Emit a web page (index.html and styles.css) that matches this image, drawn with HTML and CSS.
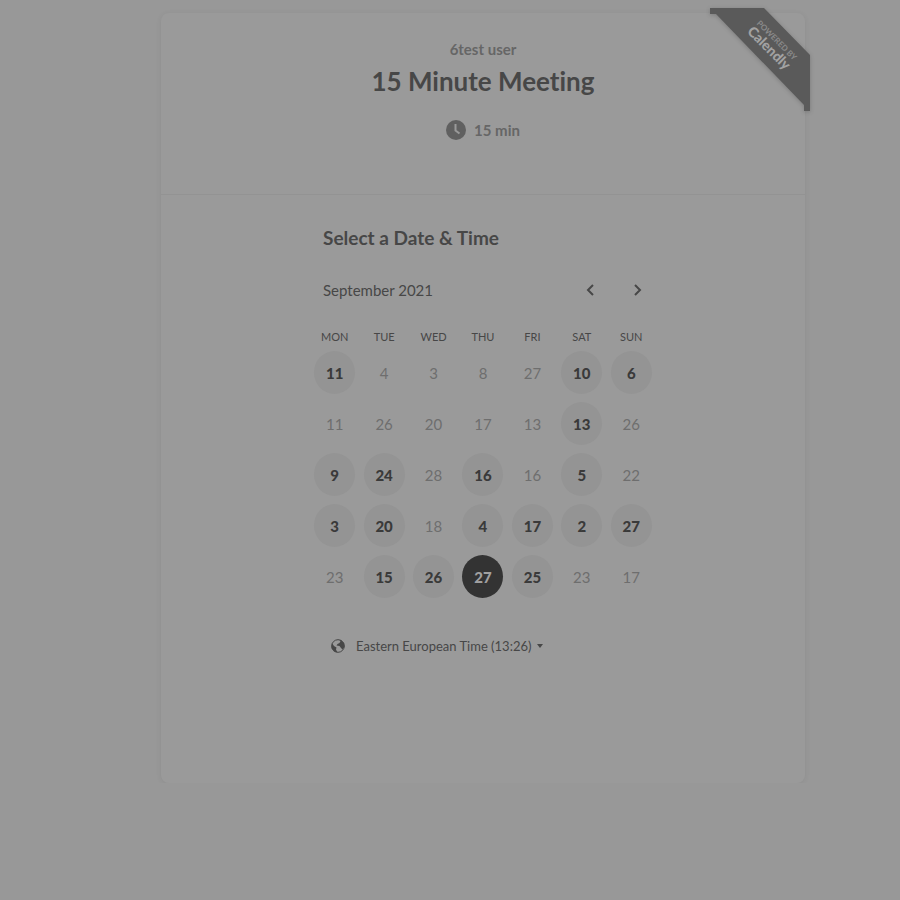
FILE: index.html
```html
<!DOCTYPE html>
<html lang="en">
<head>
<meta charset="utf-8">
<meta name="viewport" content="width=device-width, initial-scale=1">
<title>15 Minute Meeting</title>
<link rel="stylesheet" href="styles.css">
</head>
<body>
<main class="card">
  <a class="badge" href="#" aria-label="Powered by Calendly">
    <svg class="badge-shape" viewBox="0 0 100 103" aria-hidden="true">
      <path class="badge-band" d="M0 0H54L100 47V103H94V97L6 6H0Z"/>
    </svg>
    <span class="badge-text"><span class="badge-small">POWERED BY</span><span class="badge-brand">Calendly</span></span>
  </a>
  <header class="intro">
    <p class="host">6test user</p>
    <h1 class="title">15 Minute Meeting</h1>
    <p class="duration">
      <svg class="clock" viewBox="0 0 20 20" aria-hidden="true"><circle cx="10" cy="10" r="10"/><path d="M9.500 4V10.500L13.500 13.500"/></svg>
      <span>15 min</span>
    </p>
  </header>
  <section class="picker">
    <h2 class="heading">Select a Date &amp; Time</h2>
    <div class="month-bar">
      <span>September 2021</span>
      <div class="arrows">
        <button class="arrow" type="button" aria-label="Previous month"><svg viewBox="0 0 8 12"><path d="M7 1L2 6L7 11"/></svg></button>
        <button class="arrow" type="button" aria-label="Next month"><svg viewBox="0 0 8 12"><path d="M1 1L6 6L1 11"/></svg></button>
      </div>
    </div>
    <table class="calendar">
      <thead>
        <tr><th>MON</th><th>TUE</th><th>WED</th><th>THU</th><th>FRI</th><th>SAT</th><th>SUN</th></tr>
      </thead>
      <tbody>
        <tr><td><button class="day">11</button></td><td>4</td><td>3</td><td>8</td><td>27</td><td><button class="day">10</button></td><td><button class="day">6</button></td></tr>
        <tr><td>11</td><td>26</td><td>20</td><td>17</td><td>13</td><td><button class="day">13</button></td><td>26</td></tr>
        <tr><td><button class="day">9</button></td><td><button class="day">24</button></td><td>28</td><td><button class="day">16</button></td><td>16</td><td><button class="day">5</button></td><td>22</td></tr>
        <tr><td><button class="day">3</button></td><td><button class="day">20</button></td><td>18</td><td><button class="day">4</button></td><td><button class="day">17</button></td><td><button class="day">2</button></td><td><button class="day">27</button></td></tr>
        <tr><td>23</td><td><button class="day">15</button></td><td><button class="day">26</button></td><td><button class="day selected">27</button></td><td><button class="day">25</button></td><td>23</td><td>17</td></tr>
      </tbody>
    </table>
    <div class="zone">
      <svg class="globe" viewBox="0 0 14 14" aria-hidden="true"><circle cx="7" cy="7" r="6.300"/><path d="M1 4L3 7L5.500 8.500L5 10.500L6.500 13.500L3 12.500L.5 9ZM5 1L8 .7L9.500 2L8.500 4L6.500 5L5.500 6.500L8.500 7L10 9L11.500 10.500L13.500 8L13 4L10 1Z"/></svg>
      <select class="zone-select" aria-label="Time zone"><option>Eastern European Time (13:26)</option></select>
      <svg class="caret" viewBox="0 0 6 4" aria-hidden="true"><path d="M0 0H6L3 4Z"/></svg>
    </div>
  </section>
</main>
</body>
</html>
```
FILE: styles.css
```css
* { box-sizing: border-box; }
body {
  margin: 0;
  padding: 13px 95px 0 161px;
  background: #989898;
  color: #474747;
  font-family: Lato, "Liberation Sans", sans-serif;
  font-variant-ligatures: none;
}
p, h1, h2 { margin: 0; }
button, select { font: inherit; color: inherit; border: 0; background: none; padding: 0; }
.card {
  position: relative;
  min-height: 770px;
  border-radius: 8px;
  background: #9a9a9a;
  box-shadow: 0 1px 5px 1px rgba(0, 0, 0, .05);
}
.badge { position: absolute; top: -5px; right: -5px; width: 100px; color: #a2a2a2; }
.badge-shape { display: block; filter: drop-shadow(0 1px 2px rgba(0, 0, 0, .2)); }
.badge-band { fill: #5a5a5a; }
.badge-text {
  position: absolute;
  top: 26px;
  left: 27px;
  width: 70px;
  transform: rotate(45deg);
  text-align: center;
}
.badge-small, .badge-brand { display: block; }
.badge-small { font-size: 8px; line-height: 8px; font-weight: 700; color: #8b8b8b; }
.badge-brand { font-size: 14px; line-height: 14px; font-weight: 900; }
.intro {
  padding: 26px 0 54px;
  border-bottom: 1px solid #939393;
  text-align: center;
  font-size: 15px;
  line-height: 20px;
  font-weight: 700;
  color: #666;
}
.title { margin: 4px 0 21px; font-size: 26px; line-height: 36px; color: #474747; }
.duration { display: flex; justify-content: center; align-items: center; gap: 8px; }
.clock { width: 20px; height: 20px; fill: #606060; }
.clock path { fill: none; stroke: #9a9a9a; stroke-width: 2; }
.picker { width: 346px; margin: 0 auto; padding-top: 31px; }
.heading { padding-left: 13px; font-size: 19px; line-height: 24px; }
.month-bar {
  display: flex;
  justify-content: space-between;
  align-items: center;
  margin: 28px 6px 0 13px;
  font-size: 15px;
  line-height: 24px;
}
.arrows { display: flex; gap: 24px; }
.arrow { width: 24px; height: 24px; }
.arrow svg { display: block; width: 8px; height: 12px; margin: auto; fill: none; stroke: #474747; stroke-width: 2; }
.calendar { width: 100%; margin-top: 23px; border-collapse: collapse; table-layout: fixed; text-align: center; }
.calendar th { height: 22px; padding: 0; font-size: 11px; font-weight: 400; }
.calendar td { height: 51px; padding: 0; font-size: 15px; color: #6e6e6e; }
.day { width: 41px; height: 43px; border-radius: 50%; background: #949494; color: #3a3a3a; font-weight: 900; }
.selected { background: #333; color: #a0a0a0; }
.zone { display: flex; align-items: center; padding-left: 21px; margin-top: 34px; font-size: 13px; line-height: 20px; }
.globe { width: 14px; height: 14px; margin-right: 11px; fill: #474747; }
.globe circle { fill: none; stroke: #474747; }
.zone-select { appearance: none; }
.caret { width: 6px; height: 4px; margin-left: 5px; fill: #474747; }
```
